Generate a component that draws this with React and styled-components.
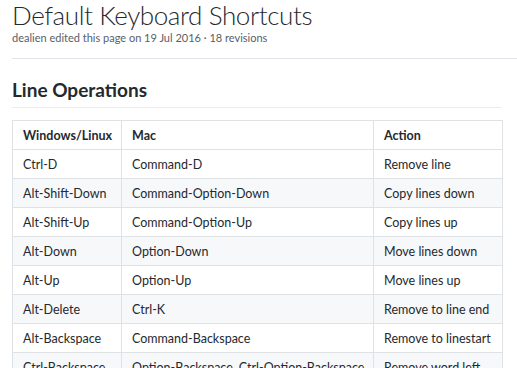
import React from 'react'
import styled, { createGlobalStyle } from 'styled-components'

const GlobalStyle = createGlobalStyle`
  html, body {
    margin: 0;
    padding: 0;
    background: #fff;
  }

  body {
    font-family: Lato, "Open Sans", "Liberation Sans", sans-serif;
    color: #24292e;
    -webkit-font-smoothing: antialiased;
  }
`

const Page = styled.div`
  padding: 0 0 0 12px;
  overflow: hidden;
`

const Header = styled.header`
  border-bottom: 1px solid #e1e4e8;
  padding-bottom: 12px;

  h1 {
    font-size: 26px;
    font-weight: 300;
    line-height: 30px;
    letter-spacing: -0.4px;
    margin: 0;
  }

  .meta {
    font-size: 11px;
    color: #586069;
    line-height: 16px;
  }
`

const Section = styled.section`
  padding-right: 16px;

  h2 {
    font-size: 19px;
    font-weight: 700;
    line-height: 24px;
    margin: 19px 0 0;
    padding-bottom: 5px;
    border-bottom: 1px solid #eaecef;
  }
`

const Table = styled.table`
  border-collapse: collapse;
  border-spacing: 0;
  table-layout: fixed;
  width: 490px;
  margin-top: 12px;
  font-size: 12.5px;

  th,
  td {
    box-sizing: border-box;
    border: 1px solid #dfe2e5;
    padding: 0 10px;
    height: 29px;
    text-align: left;
    white-space: nowrap;
    overflow: hidden;
  }

  th {
    font-weight: 700;
  }

  th:nth-child(1) { width: 109px; }
  th:nth-child(2) { width: 252px; }
  th:nth-child(3) { width: 129px; }

  tbody tr:nth-child(2n) {
    background: #f6f8fa;
  }
`

const shortcuts = [
  ['Ctrl-D', 'Command-D', 'Remove line'],
  ['Alt-Shift-Down', 'Command-Option-Down', 'Copy lines down'],
  ['Alt-Shift-Up', 'Command-Option-Up', 'Copy lines up'],
  ['Alt-Down', 'Option-Down', 'Move lines down'],
  ['Alt-Up', 'Option-Up', 'Move lines up'],
  ['Alt-Delete', 'Ctrl-K', 'Remove to line end'],
  ['Alt-Backspace', 'Command-Backspace', 'Remove to linestart'],
  ['Ctrl-Backspace', 'Option-Backspace, Ctrl-Option-Backspace', 'Remove word left'],
]

export default function App() {
  return (
    <Page>
      <GlobalStyle />
      <Header>
        <h1>Default Keyboard Shortcuts</h1>
        <div className="meta">
          dealien edited this page on 19 Jul 2016 · 18 revisions
        </div>
      </Header>
      <Section>
        <h2>Line Operations</h2>
        <Table>
          <thead>
            <tr>
              <th>Windows/Linux</th>
              <th>Mac</th>
              <th>Action</th>
            </tr>
          </thead>
          <tbody>
            { shortcuts.map( row => (
              <tr key={ row[0] }>
                <td>{ row[0] }</td>
                <td>{ row[1] }</td>
                <td>{ row[2] }</td>
              </tr>
            ) ) }
          </tbody>
        </Table>
      </Section>
    </Page>
  )
}
